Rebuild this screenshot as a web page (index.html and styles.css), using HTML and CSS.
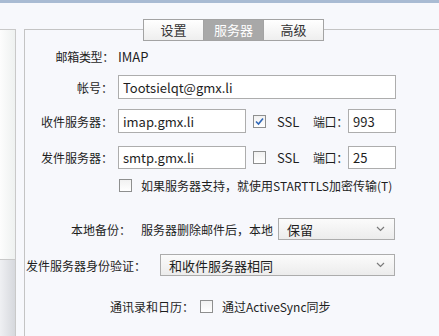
FILE: index.html
```html
<!DOCTYPE html>
<html lang="zh-CN">
<head>
    <meta charset="UTF-8">
    <title>账户设置 - 服务器</title>
    <link rel="stylesheet" href="styles.css">
</head>
<body>
    <div class="topbar"></div>
    <div class="window">
        <div class="sidebar">
            <div class="side-list"></div>
            <div class="side-foot"></div>
        </div>
        <div class="main">
            <div class="panel">
                <div class="tabs">
                    <span class="tab">设置</span>
                    <span class="tab active">服务器</span>
                    <span class="tab">高级</span>
                </div>

                <div class="row row-type">
                    <span class="label">邮箱类型：</span>
                    <span class="value">IMAP</span>
                </div>
                <div class="row row-account">
                    <span class="label">帐号：</span>
                    <input class="field field-wide" type="text" value="Tootsielqt@gmx.li">
                </div>
                <div class="row row-in">
                    <span class="label">收件服务器：</span>
                    <input class="field field-host" type="text" value="imap.gmx.li">
                    <span class="check checked">
                        <svg width="11" height="11" viewBox="0 0 11 11"><path d="M2 5.5 L4.5 8 L9 2.5" fill="none" stroke="#2f67b8" stroke-width="1.6"/></svg>
                    </span>
                    <span class="ssl">SSL</span>
                    <span class="port-label">端口：</span>
                    <input class="field field-port" type="text" value="993">
                </div>
                <div class="row row-out">
                    <span class="label">发件服务器：</span>
                    <input class="field field-host" type="text" value="smtp.gmx.li">
                    <span class="check"></span>
                    <span class="ssl">SSL</span>
                    <span class="port-label">端口：</span>
                    <input class="field field-port" type="text" value="25">
                </div>
                <div class="row row-tls">
                    <span class="check"></span>
                    <span class="check-text">如果服务器支持，就使用STARTTLS加密传输(T)</span>
                </div>
                <div class="row row-backup">
                    <span>本地备份：</span>
                    <span class="backup-text">服务器删除邮件后，本地</span>
                    <div class="select select-backup">
                        <span>保留</span>
                        <svg width="9" height="6" viewBox="0 0 9 6"><path d="M1 1 L4.5 4.5 L8 1" fill="none" stroke="#7a7a7a" stroke-width="1.2"/></svg>
                    </div>
                </div>
                <div class="row row-auth">
                    <span>发件服务器身份验证：</span>
                    <div class="select select-auth">
                        <span>和收件服务器相同</span>
                        <svg width="9" height="6" viewBox="0 0 9 6"><path d="M1 1 L4.5 4.5 L8 1" fill="none" stroke="#7a7a7a" stroke-width="1.2"/></svg>
                    </div>
                </div>
                <div class="row row-sync">
                    <span>通讯录和日历：</span>
                    <span class="check"></span>
                    <span class="check-text">通过ActiveSync同步</span>
                </div>
            </div>
        </div>
    </div>
</body>
</html>
```

FILE: styles.css
```css
body {
    margin: 0;
    background-color: #f7f8fc;
    font-family: "Noto Sans CJK SC", "Noto Sans", sans-serif;
    font-size: 12px;
    color: #1e1e1e;
    height: 336px;
    overflow: hidden;
}
.topbar {
    height: 3px;
    background-color: #a9bbd3;
}
.window {
    display: flex;
    height: 333px;
}
.sidebar {
    width: 15px;
    margin-top: 26px;
    border-top: 1px solid #c9c9c9;
    border-right: 1px solid #c9c9c9;
    display: flex;
    flex-direction: column;
}
.side-list {
    height: 229px;
    border-bottom: 1px solid #c9c9c9;
    background: linear-gradient(to right, #fdfdfd, #eef1f0);
}
.side-foot {
    flex: 1;
    background: linear-gradient(to right, #eff0f3, #d6d8dd);
}
.main {
    flex: 1;
    margin-left: 8px;
}
.panel {
    margin-top: 26px;
    border-top: 1px solid #c4c4c4;
    border-left: 1px solid #c4c4c4;
    height: 310px;
}
.tabs {
    display: flex;
    margin: -11px 0 0 118px;
    height: 22px;
}
.tab {
    width: 59px;
    height: 20px;
    line-height: 20px;
    text-align: center;
    border: 1px solid #a3a3a3;
    margin-right: -1px;
    background: linear-gradient(#ffffff, #eeeeee);
    color: #333;
    font-size: 13px;
}
.tab.active {
    background: #a8a8a8;
    color: #fff;
}
.row {
    display: flex;
    align-items: center;
    height: 24px;
    white-space: nowrap;
}
.row > * {
    flex-shrink: 0;
}
.label {
    width: 88px;
    text-align: right;
    margin-right: 5px;
}
.row-type {
    margin-top: 3px;
}
.row-type .label {
    width: 89px;
    margin-right: 4px;
    letter-spacing: -0.3px;
}
.value {
    font-size: 13px;
}
.row-account {
    margin-top: 7px;
}
.row-in {
    margin-top: 10px;
}
.row-out {
    margin-top: 13px;
    height: 23px;
}
.field {
    box-sizing: border-box;
    height: 100%;
    border: 1px solid #adadad;
    background: #fff;
    font-family: "Noto Sans CJK SC", "Noto Sans", sans-serif;
    font-size: 13px;
    color: #1e1e1e;
    padding: 0 4px;
    margin: 0;
    outline: none;
}
.field-wide {
    width: 278px;
}
.field-host {
    width: 128px;
}
.field-port {
    width: 48px;
}
.check {
    box-sizing: border-box;
    width: 13px;
    height: 13px;
    border: 1px solid #8e8f8f;
    background: linear-gradient(#f1f1f1, #ffffff);
    display: inline-flex;
    align-items: center;
    justify-content: center;
}
.row-in .check,
.row-out .check {
    margin-left: 7px;
}
.ssl {
    margin-left: 11px;
    width: 36px;
    font-size: 13px;
}
.port-label {
    width: 35px;
    letter-spacing: -0.4px;
}
.row-tls {
    margin-top: 4px;
    padding-left: 94px;
}
.check-text {
    margin-left: 9px;
}
.row-backup {
    margin-top: 21px;
    height: 22px;
    padding-left: 46px;
}
.backup-text {
    margin-left: 10px;
    margin-right: 5px;
}
.select {
    box-sizing: border-box;
    height: 22px;
    border: 1px solid #acacac;
    background: linear-gradient(#fbfbfb, #ececec);
    display: flex;
    align-items: center;
    justify-content: space-between;
    padding: 0 9px 0 8px;
    font-size: 13px;
}
.select-backup {
    width: 117px;
}
.row-auth {
    margin-top: 14px;
    height: 22px;
    padding-left: 1px;
}
.select-auth {
    width: 235px;
    margin-left: 14px;
}
.row-sync {
    margin-top: 18px;
    padding-left: 85px;
}
.row-sync .check {
    margin-left: 6px;
}
```
